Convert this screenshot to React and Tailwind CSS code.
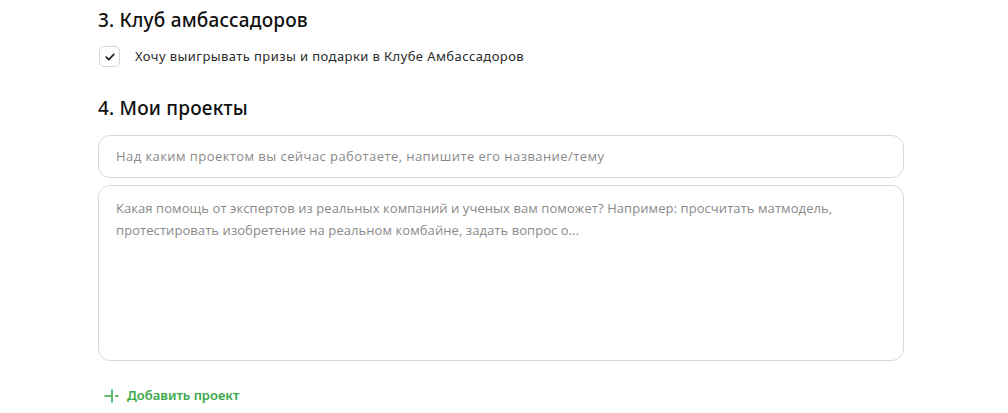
import React from "react";

export default function App() {
  return (
    <div className="w-[1008px] h-[413px] bg-white overflow-hidden font-['Noto_Sans',sans-serif]">
      <div className="pl-[98px] pr-[104px] pt-[8px]">
        <h2 className="text-[19px] leading-[24px] font-medium tracking-[0.2px] text-[#111]">
          3. Клуб амбассадоров
        </h2>
        <label className="flex items-center mt-[14px] h-[21px]">
          <span className="ml-[1px] w-[21px] h-[21px] rounded-[5px] border border-[#d6d6d6] flex items-center justify-center">
            <svg width="10" height="8" viewBox="0 0 10 8" fill="none">
              <path d="M1.2 4.2 L3.8 6.6 L8.8 1.4" stroke="#222" strokeWidth="1.7" strokeLinecap="round" strokeLinejoin="round" />
            </svg>
          </span>
          <span className="ml-[15px] text-[13px] tracking-[0.42px] text-[#2a2a2a]">
            Хочу выигрывать призы и подарки в Клубе Амбассадоров
          </span>
        </label>
        <h2 className="mt-[29px] text-[19px] leading-[24px] font-medium tracking-[0.2px] text-[#111]">
          4. Мои проекты
        </h2>
        <div className="mt-[15px] h-[43px] rounded-[12px] border border-[#d9d9d9] flex items-center px-[17px]">
          <span className="font-['Open_Sans',sans-serif] text-[13px] tracking-[0.43px] text-[#8a8a8a]">
            Над каким проектом вы сейчас работаете, напишите его название/тему
          </span>
        </div>
        <div className="mt-[7px] h-[176px] rounded-[12px] border border-[#d9d9d9] px-[17px] pt-[11px]">
          <p className="font-['Open_Sans',sans-serif] text-[13px] leading-[22px] tracking-[0.07px] text-[#8a8a8a]">
            Какая помощь от экспертов из реальных компаний и ученых вам поможет? Например: просчитать матмодель,
            <br />
            протестировать изобретение на реальном комбайне, задать вопрос о...
          </p>
        </div>
        <div className="mt-[27px] flex items-center ml-[6px] h-[16px]">
          <svg width="16" height="14" viewBox="0 0 16 14" fill="none">
            <path d="M0.5 7 H7" stroke="#3aa84a" strokeWidth="1.6" />
            <path d="M8 0.5 V13.5" stroke="#3aa84a" strokeWidth="1.6" />
            <path d="M11 7 H14.5" stroke="#3aa84a" strokeWidth="1.6" />
          </svg>
          <span className="ml-[7px] text-[13px] font-semibold text-[#3aa84a]">
            Добавить проект
          </span>
        </div>
      </div>
    </div>
  );
}
